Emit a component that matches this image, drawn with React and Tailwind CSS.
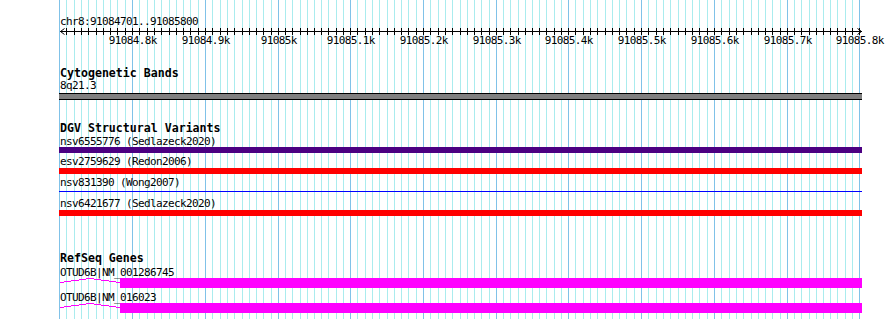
import React from "react";

const MAJORS = [59, 132, 205, 278, 350, 423, 496, 568, 641, 714, 787, 859];
const MINORS = [];
for (let k = 0; k < MAJORS.length - 1; k++) {
  for (let j = 1; j < 10; j++) {
    MINORS.push(Math.round(MAJORS[k] + ((MAJORS[k + 1] - MAJORS[k]) * j) / 10));
  }
}
const LABELS = [
  "91084.8k",
  "91084.9k",
  "91085k",
  "91085.1k",
  "91085.2k",
  "91085.3k",
  "91085.4k",
  "91085.5k",
  "91085.6k",
  "91085.7k",
  "91085.8k",
];

const mono = "font-['DejaVu_Sans_Mono','Liberation_Mono',monospace]";

function Grid() {
  return (
    <svg
      className="absolute inset-0"
      width="890"
      height="319"
      shapeRendering="crispEdges"
    >
      {MINORS.map((x) => (
        <line key={"m" + x} x1={x + 0.5} x2={x + 0.5} y1="0" y2="319" stroke="#aaecee" strokeWidth="1" />
      ))}
      {MAJORS.map((x) => (
        <line key={"M" + x} x1={x + 0.5} x2={x + 0.5} y1="0" y2="319" stroke="#80c2e8" strokeWidth="1" />
      ))}
    </svg>
  );
}

function Ruler() {
  const ticks = [...MAJORS, ...MINORS].filter((x) => x > 60);
  return (
    <svg width="890" height="20" className="block -ml-[59px]">
      <g shapeRendering="crispEdges" stroke="#000" strokeWidth="1">
        <line x1="60" x2="862" y1="4.5" y2="4.5" />
        {ticks.map((x) => (
          <line key={x} x1={x + 0.5} x2={x + 0.5} y1="1" y2="8" />
        ))}
      </g>
      <g stroke="#000" strokeWidth="1" fill="none">
        <polyline points="64.5,1.5 60.5,4.5 64.5,7.5" />
        <polyline points="857.5,1.5 861.5,4.5 857.5,7.5" />
      </g>
      {LABELS.map((t, i) => (
        <text
          key={t}
          x={MAJORS[i + 1] + 0.8}
          y="16.5"
          textAnchor="middle"
          fontFamily="'DejaVu Sans Mono','Liberation Mono',monospace"
          fontSize="11"
          letterSpacing="-0.62"
          fill="#000"
        >
          {t}
        </text>
      ))}
    </svg>
  );
}

function Small({ children, className = "" }) {
  return (
    <div className={`${mono} text-[11px] tracking-[-0.62px] leading-[11px] text-black pl-px whitespace-pre ${className}`}>
      {children}
    </div>
  );
}

function Title({ children, className = "" }) {
  return (
    <div className={`${mono} text-[11.6px] leading-[12px] font-bold text-black pl-px whitespace-pre ${className}`}>
      {children}
    </div>
  );
}

function GeneRow({ className = "" }) {
  return (
    <div className={`flex h-[10px] ${className}`}>
      <svg width="61" height="10" className="block shrink-0" shapeRendering="crispEdges">
        <polyline points="1,4.5 31,0.5 61,4.5" fill="none" stroke="#ff00ff" strokeWidth="1" />
      </svg>
      <div className="flex-1 bg-[#ff00ff]" />
    </div>
  );
}

export default function App() {
  return (
    <div className="relative w-[890px] h-[319px] bg-white overflow-hidden">
      <Grid />
      <div className="relative ml-[59px] w-[803px] pt-[16px]">
        <Small>chr8:91084701..91085800</Small>
        <Ruler />

        <Title className="mt-[20px]">Cytogenetic Bands</Title>
        <Small className="mt-[1px]">8q21.3</Small>
        <div className="mt-[2px] h-[7px] bg-[#808080] border-y border-black" />

        <Title className="mt-[22px]">DGV Structural Variants</Title>
        <Small className="mt-[2px]">nsv6555776 (Sedlazeck2020)</Small>
        <div className="h-[6px] bg-[#4b0082]" />
        <Small className="mt-[3px]">esv2759629 (Redon2006)</Small>
        <div className="mt-[1px] h-[6px] bg-[#ff0000]" />
        <Small className="mt-[3px]">nsv831390 (Wong2007)</Small>
        <div className="mt-[3px] h-px bg-[#0000ff]" />
        <Small className="mt-[6px]">nsv6421677 (Sedlazeck2020)</Small>
        <div className="mt-[1px] h-[6px] bg-[#ff0000]" />

        <Title className="mt-[36px]">RefSeq Genes</Title>
        <Small className="mt-[3px]">OTUD6B|NM_001286745</Small>
        <GeneRow />
        <Small className="mt-[4px]">OTUD6B|NM_016023</Small>
        <GeneRow />
      </div>
    </div>
  );
}
